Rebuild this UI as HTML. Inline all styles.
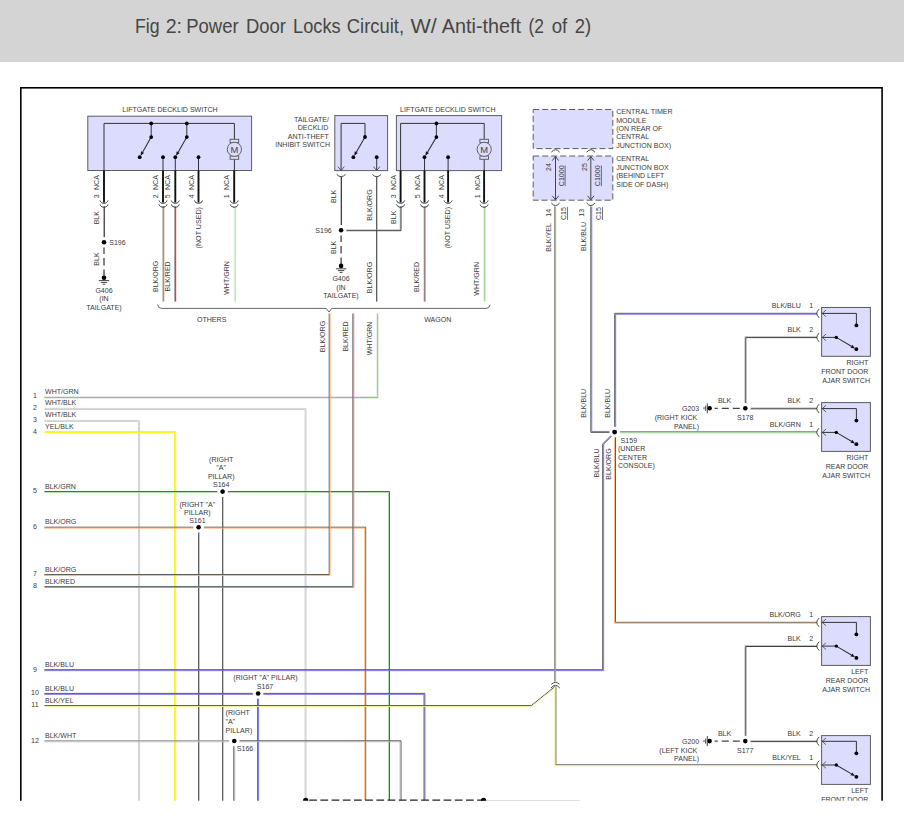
<!DOCTYPE html>
<html><head><meta charset="utf-8"><title>Fig 2: Power Door Locks Circuit</title>
<style>
html,body{margin:0;padding:0;background:#fff;}
body{width:904px;height:816px;overflow:hidden;position:relative;font-family:"Liberation Sans",sans-serif;}
#hdr{position:absolute;left:0;top:0;width:904px;height:61.6px;background:#d4d4d4;}
svg{position:absolute;left:0;top:0;}
</style></head><body>
<div id="hdr"></div>
<svg width="904" height="816" viewBox="0 0 904 816" font-family="Liberation Sans, sans-serif">
<g font-size="20.4" fill="#464646"><text x="134.93" y="33.4" textLength="24.56" lengthAdjust="spacingAndGlyphs">Fig</text><text x="165.64" y="33.4" textLength="16.36" lengthAdjust="spacingAndGlyphs">2:</text><text x="186.19" y="33.4" textLength="52.42" lengthAdjust="spacingAndGlyphs">Power</text><text x="245.89" y="33.4" textLength="40.02" lengthAdjust="spacingAndGlyphs">Door</text><text x="293.11" y="33.4" textLength="47.57" lengthAdjust="spacingAndGlyphs">Locks</text><text x="346.80" y="33.4" textLength="57.20" lengthAdjust="spacingAndGlyphs">Circuit,</text><text x="410.40" y="33.4" textLength="26.25" lengthAdjust="spacingAndGlyphs">W/</text><text x="441.80" y="33.4" textLength="79.27" lengthAdjust="spacingAndGlyphs">Anti-theft</text><text x="528.55" y="33.4" textLength="15.44" lengthAdjust="spacingAndGlyphs">(2</text><text x="551.70" y="33.4" textLength="15.59" lengthAdjust="spacingAndGlyphs">of</text><text x="574.69" y="33.4" textLength="16.42" lengthAdjust="spacingAndGlyphs">2)</text></g>
<defs><clipPath id="clip"><rect x="0" y="62" width="904" height="738.7"/></clipPath></defs>
<g clip-path="url(#clip)">
<rect x="20.8" y="87.8" width="861.3" height="760" fill="#fff" stroke="#000" stroke-width="1.6"/>
<g fill="none" stroke-linecap="butt" stroke-linejoin="miter">
<polyline points="44.40,396.60 376.75,396.60 376.75,313.50" stroke="#e6e0e6" stroke-width="0.90"/>
<polyline points="44.40,397.60 377.75,397.60 377.75,313.50" stroke="#88cc74" stroke-width="1.10"/>
<polyline points="44.40,408.40 306.10,408.40 306.10,800.30" stroke="#d6d6d6" stroke-width="1.00"/>
<polyline points="44.40,409.35 305.15,409.35 305.15,800.30" stroke="#c4c4c4" stroke-width="0.90"/>
<polyline points="44.40,420.40 139.60,420.40 139.60,806.00" stroke="#d6d6d6" stroke-width="1.00"/>
<polyline points="44.40,421.35 138.65,421.35 138.65,806.00" stroke="#c4c4c4" stroke-width="0.90"/>
<polyline points="44.40,431.45 175.80,431.45 175.80,806.00" stroke="#c4c4d0" stroke-width="0.60"/>
<polyline points="44.40,432.50 174.75,432.50 174.75,806.00" stroke="#f8f81c" stroke-width="1.50"/>
<polyline points="44.40,491.50 389.50,491.50 389.50,800.20" stroke="#585a5a" stroke-width="1.00"/>
<polyline points="44.40,492.45 388.55,492.45 388.55,800.20" stroke="#a4dc9c" stroke-width="0.90"/>
<polyline points="222.55,806.00 222.55,492.00" stroke="#585a5a" stroke-width="1.00"/>
<polyline points="223.50,806.00 223.50,492.00" stroke="#a4dc9c" stroke-width="0.90"/>
<polyline points="44.40,527.20 365.70,527.20 365.70,800.20" stroke="#585a5a" stroke-width="1.00"/>
<polyline points="44.40,528.15 364.75,528.15 364.75,800.20" stroke="#f8ae6c" stroke-width="0.90"/>
<polyline points="198.50,806.00 198.50,527.70" stroke="#585a5a" stroke-width="1.00"/>
<polyline points="199.45,806.00 199.45,527.70" stroke="#f8ae6c" stroke-width="0.90"/>
<polyline points="44.40,574.50 329.20,574.50 329.20,313.50" stroke="#585a5a" stroke-width="1.00"/>
<polyline points="44.40,575.45 330.15,575.45 330.15,313.50" stroke="#f8ae6c" stroke-width="0.90"/>
<polyline points="44.40,586.50 352.80,586.50 352.80,313.50" stroke="#6c6c6c" stroke-width="1.00"/>
<polyline points="44.40,587.45 353.75,587.45 353.75,313.50" stroke="#f06c6c" stroke-width="0.90"/>
<polyline points="44.40,669.70 602.70,669.70 602.70,444.00 614.24,432.25" stroke="#585a5a" stroke-width="1.00"/>
<polyline points="44.40,670.65 603.65,670.65 603.65,444.38 614.92,432.92" stroke="#6a6ae8" stroke-width="0.90"/>
<polyline points="44.40,693.40 424.85,693.40 424.85,800.20" stroke="#585a5a" stroke-width="1.00"/>
<polyline points="44.40,694.35 423.90,694.35 423.90,800.20" stroke="#6a6ae8" stroke-width="0.90"/>
<polyline points="257.65,806.00 257.65,693.90" stroke="#585a5a" stroke-width="1.00"/>
<polyline points="258.60,806.00 258.60,693.90" stroke="#6a6ae8" stroke-width="0.90"/>
<polyline points="44.40,705.50 531.42,705.50 555.09,686.41" stroke="#585a5a" stroke-width="1.00"/>
<polyline points="44.40,706.45 531.76,706.45 555.68,687.15" stroke="#f0f078" stroke-width="0.90"/>
<polyline points="44.40,740.80 234.30,740.80" stroke="#8e8e8e" stroke-width="1.00"/>
<polyline points="44.40,741.75 234.30,741.75" stroke="#bcbcbc" stroke-width="0.90"/>
<polyline points="234.30,740.80 401.00,740.80 401.00,800.20" stroke="#585858" stroke-width="1.00"/>
<polyline points="234.30,741.75 400.05,741.75 400.05,800.20" stroke="#b4b4b4" stroke-width="0.90"/>
<polyline points="233.80,806.00 233.80,741.30" stroke="#545454" stroke-width="1.00"/>
<polyline points="234.75,806.00 234.75,741.30" stroke="#b0b0b0" stroke-width="0.90"/>
<polyline points="554.65,681.50 554.65,206.50" stroke="#8c8c7c" stroke-width="1.00"/>
<polyline points="555.60,681.50 555.60,206.50" stroke="#a8a850" stroke-width="0.90"/>
<polyline points="555.90,686.50 555.90,764.80 817.00,764.80" stroke="#585a5a" stroke-width="1.00"/>
<polyline points="554.95,686.50 554.95,765.75 817.00,765.75" stroke="#f0f078" stroke-width="0.90"/>
<polyline points="614.60,432.40 590.80,432.40 590.80,206.50" stroke="#585a5a" stroke-width="1.00"/>
<polyline points="614.60,431.45 591.75,431.45 591.75,206.50" stroke="#6a6ae8" stroke-width="0.90"/>
<polyline points="614.70,432.00 614.70,313.30 817.00,313.30" stroke="#585a5a" stroke-width="1.00"/>
<polyline points="615.65,432.00 615.65,314.25 817.00,314.25" stroke="#6a6ae8" stroke-width="0.90"/>
<polyline points="614.60,431.90 817.00,431.90" stroke="#585a5a" stroke-width="1.00"/>
<polyline points="614.60,432.85 817.00,432.85" stroke="#a4dc9c" stroke-width="0.90"/>
<polyline points="615.50,432.00 615.50,622.30 817.00,622.30" stroke="#585a5a" stroke-width="1.00"/>
<polyline points="614.55,432.00 614.55,623.25 817.00,623.25" stroke="#f8ae6c" stroke-width="0.90"/>
<polyline points="162.70,301.60 162.70,206.50" stroke="#8e8e8e" stroke-width="0.60"/>
<polyline points="163.65,301.60 163.65,206.50" stroke="#c88c50" stroke-width="1.30"/>
<polyline points="174.55,301.60 174.55,206.50" stroke="#8a8a8a" stroke-width="0.70"/>
<polyline points="175.55,301.60 175.55,206.50" stroke="#d64646" stroke-width="1.30"/>
<polyline points="234.40,301.60 234.40,206.50" stroke="#d8ecd4" stroke-width="1.00"/>
<polyline points="235.50,301.60 235.50,206.50" stroke="#c4e4c0" stroke-width="1.20"/>
<polyline points="376.50,301.60 376.50,176.50" stroke="#585a5a" stroke-width="1.00"/>
<polyline points="377.45,301.60 377.45,176.50" stroke="#f8ae6c" stroke-width="0.90"/>
<polyline points="424.30,301.60 424.30,206.50" stroke="#6c6c6c" stroke-width="1.00"/>
<polyline points="425.25,301.60 425.25,206.50" stroke="#f06c6c" stroke-width="0.90"/>
<polyline points="483.85,301.60 483.85,206.50" stroke="#e6e0e6" stroke-width="0.90"/>
<polyline points="484.85,301.60 484.85,206.50" stroke="#88cc74" stroke-width="1.10"/>
<polyline points="103.55,242.20 103.55,206.50" stroke="#9c9c9c" stroke-width="0.70"/>
<polyline points="104.40,242.20 104.40,206.50" stroke="#3e3e3e" stroke-width="1.00"/>
<polyline points="104.00,246.50 104.00,277.70" stroke="#444" stroke-width="1.30" stroke-dasharray="7.6 3.9"/>
<polyline points="340.65,230.20 340.65,176.80" stroke="#9c9c9c" stroke-width="0.70"/>
<polyline points="341.50,230.20 341.50,176.80" stroke="#3e3e3e" stroke-width="1.00"/>
<polyline points="341.10,234.50 341.10,265.60" stroke="#444" stroke-width="1.30" stroke-dasharray="7.6 3.9"/>
<polyline points="341.10,229.85 400.15,229.85 400.15,206.50" stroke="#9c9c9c" stroke-width="0.70"/>
<polyline points="341.10,230.70 401.00,230.70 401.00,206.50" stroke="#3e3e3e" stroke-width="1.00"/>
<polyline points="744.95,408.30 744.95,336.75 817.00,336.75" stroke="#9c9c9c" stroke-width="0.70"/>
<polyline points="745.80,408.30 745.80,337.60 817.00,337.60" stroke="#3e3e3e" stroke-width="1.00"/>
<polyline points="745.30,407.95 817.00,407.95" stroke="#9c9c9c" stroke-width="0.70"/>
<polyline points="745.30,408.80 817.00,408.80" stroke="#3e3e3e" stroke-width="1.00"/>
<polyline points="739.80,408.40 714.60,408.40" stroke="#444" stroke-width="1.30" stroke-dasharray="7.0 4.0"/>
<polyline points="744.95,741.10 744.95,645.65 817.00,645.65" stroke="#9c9c9c" stroke-width="0.70"/>
<polyline points="745.80,741.10 745.80,646.50 817.00,646.50" stroke="#3e3e3e" stroke-width="1.00"/>
<polyline points="745.30,740.75 817.00,740.75" stroke="#9c9c9c" stroke-width="0.70"/>
<polyline points="745.30,741.60 817.00,741.60" stroke="#3e3e3e" stroke-width="1.00"/>
<polyline points="739.80,741.20 714.60,741.20" stroke="#444" stroke-width="1.30" stroke-dasharray="7.0 4.0"/>
<polyline points="309.20,800.40 483.60,800.40" stroke="#222" stroke-width="1.80" stroke-dasharray="7.7 3.5"/>
<polyline points="483.60,800.60 579.60,800.60" stroke="#cfcfcf" stroke-width="1.00"/>
</g>
<circle cx="222.60" cy="491.60" r="5.3" fill="#fff" stroke="none"/>
<circle cx="222.60" cy="491.60" r="2.30" fill="#000" stroke="none"/>
<circle cx="198.60" cy="527.30" r="5.3" fill="#fff" stroke="none"/>
<circle cx="198.60" cy="527.30" r="2.30" fill="#000" stroke="none"/>
<circle cx="258.10" cy="693.50" r="5.3" fill="#fff" stroke="none"/>
<circle cx="258.10" cy="693.50" r="2.30" fill="#000" stroke="none"/>
<circle cx="234.30" cy="741.00" r="5.3" fill="#fff" stroke="none"/>
<circle cx="234.30" cy="741.00" r="2.30" fill="#000" stroke="none"/>
<circle cx="104.00" cy="242.20" r="5.3" fill="#fff" stroke="none"/>
<circle cx="104.00" cy="242.20" r="2.30" fill="#000" stroke="none"/>
<circle cx="341.10" cy="230.30" r="5.3" fill="#fff" stroke="none"/>
<circle cx="341.10" cy="230.30" r="2.30" fill="#000" stroke="none"/>
<circle cx="745.30" cy="408.30" r="5.3" fill="#fff" stroke="none"/>
<circle cx="745.30" cy="408.30" r="2.30" fill="#000" stroke="none"/>
<circle cx="745.30" cy="741.10" r="5.3" fill="#fff" stroke="none"/>
<circle cx="745.30" cy="741.10" r="2.30" fill="#000" stroke="none"/>
<circle cx="614.60" cy="432.10" r="5.3" fill="#fff" stroke="none"/>
<circle cx="614.60" cy="432.10" r="2.45" fill="#000" stroke="none"/>
<circle cx="305.70" cy="800.30" r="2.60" fill="#000" stroke="none"/>
<circle cx="483.60" cy="800.30" r="2.60" fill="#000" stroke="none"/>
<circle cx="104.00" cy="277.70" r="2.30" fill="#000" stroke="none"/>
<g stroke="#333" stroke-width="0.9" fill="none">
<line x1="98.80" y1="280.60" x2="109.20" y2="280.60"/>
<line x1="100.80" y1="282.40" x2="107.20" y2="282.40"/>
<line x1="102.60" y1="284.20" x2="105.40" y2="284.20"/>
</g>
<circle cx="341.10" cy="265.90" r="2.30" fill="#000" stroke="none"/>
<g stroke="#333" stroke-width="0.9" fill="none">
<line x1="335.90" y1="268.80" x2="346.30" y2="268.80"/>
<line x1="337.90" y1="270.60" x2="344.30" y2="270.60"/>
<line x1="339.70" y1="272.40" x2="342.50" y2="272.40"/>
</g>
<circle cx="709.60" cy="408.30" r="2.30" fill="#000" stroke="none"/>
<g stroke="#333" stroke-width="0.9" fill="none">
<line x1="707.30" y1="403.30" x2="707.30" y2="413.30"/>
<line x1="705.70" y1="405.70" x2="705.70" y2="410.90"/>
<line x1="704.00" y1="407.20" x2="704.00" y2="409.40"/>
</g>
<circle cx="709.60" cy="741.10" r="2.30" fill="#000" stroke="none"/>
<g stroke="#333" stroke-width="0.9" fill="none">
<line x1="707.30" y1="736.10" x2="707.30" y2="746.10"/>
<line x1="705.70" y1="738.50" x2="705.70" y2="743.70"/>
<line x1="704.00" y1="740.00" x2="704.00" y2="742.20"/>
</g>
<g fill="none" stroke="#444" stroke-width="1.0">
<path d="M551.3,684.3 Q555.4,680.4 559.5,684.3"/>
<path d="M551.0,688.0 Q555.4,682.6 559.8,688.0"/>
</g>
<rect x="87.80" y="116.20" width="163.80" height="54.30" fill="#dcdcff" stroke="#5c5c5c" stroke-width="1"/>
<g fill="none" stroke="#333" stroke-width="1.0">
<polyline points="104,170.6 104,123.4 234.4,123.4 234.4,139.5"/>
<line x1="234.4" y1="159.3" x2="234.4" y2="170.6"/>
<line x1="151.2" y1="123.4" x2="151.2" y2="137.1"/>
<line x1="186.8" y1="123.4" x2="186.8" y2="137.1"/>
<line x1="163.0" y1="157.2" x2="163.0" y2="170.6"/>
<line x1="175.3" y1="157.2" x2="175.3" y2="170.6"/>
<line x1="198.5" y1="157.2" x2="198.5" y2="170.6"/>
</g>
<line x1="151.20" y1="137.10" x2="142.58" y2="152.17" stroke="#333" stroke-width="1.1"/>
<polygon points="140.49,155.81 141.10,151.32 144.06,153.01" fill="#111"/>
<line x1="186.80" y1="137.10" x2="178.18" y2="152.17" stroke="#333" stroke-width="1.1"/>
<polygon points="176.09,155.81 176.70,151.32 179.66,153.01" fill="#111"/>
<circle cx="151.20" cy="123.40" r="1.90" fill="#000"/>
<circle cx="151.20" cy="137.10" r="1.90" fill="#000"/>
<circle cx="186.80" cy="123.40" r="1.90" fill="#000"/>
<circle cx="186.80" cy="137.10" r="1.90" fill="#000"/>
<circle cx="139.70" cy="157.20" r="1.90" fill="#000"/>
<circle cx="163.00" cy="157.20" r="1.90" fill="#000"/>
<circle cx="175.30" cy="157.20" r="1.90" fill="#000"/>
<circle cx="198.50" cy="157.20" r="1.90" fill="#000"/>
<g fill="#dcdcff" stroke="#555" stroke-width="0.9">
<rect x="230.10" y="139.30" width="8.6" height="3.4"/>
<rect x="230.10" y="155.90" width="8.6" height="3.4"/>
<circle cx="234.40" cy="149.30" r="7.1"/>
</g>
<text x="234.40" y="152.70" text-anchor="middle" font-size="9.4" fill="#444">M</text>
<line x1="104.00" y1="170.60" x2="104.00" y2="202.60" stroke="#111" stroke-width="1.9"/>
<g fill="none" stroke="#333" stroke-width="1.0">
<path d="M100.00,200.50 C100.80,204.20 107.20,204.20 108.00,200.50"/>
<path d="M100.00,204.40 C100.80,208.10 107.20,208.10 108.00,204.40"/>
</g>
<line x1="163.00" y1="170.60" x2="163.00" y2="202.60" stroke="#111" stroke-width="1.9"/>
<g fill="none" stroke="#333" stroke-width="1.0">
<path d="M159.00,200.50 C159.80,204.20 166.20,204.20 167.00,200.50"/>
<path d="M159.00,204.40 C159.80,208.10 166.20,208.10 167.00,204.40"/>
</g>
<line x1="175.30" y1="170.60" x2="175.30" y2="202.60" stroke="#111" stroke-width="1.9"/>
<g fill="none" stroke="#333" stroke-width="1.0">
<path d="M171.30,200.50 C172.10,204.20 178.50,204.20 179.30,200.50"/>
<path d="M171.30,204.40 C172.10,208.10 178.50,208.10 179.30,204.40"/>
</g>
<line x1="234.20" y1="170.60" x2="234.20" y2="202.60" stroke="#111" stroke-width="1.9"/>
<g fill="none" stroke="#333" stroke-width="1.0">
<path d="M230.20,200.50 C231.00,204.20 237.40,204.20 238.20,200.50"/>
<path d="M230.20,204.40 C231.00,208.10 237.40,208.10 238.20,204.40"/>
</g>
<line x1="198.50" y1="170.60" x2="198.50" y2="202.60" stroke="#111" stroke-width="1.9"/>
<g fill="none" stroke="#333" stroke-width="1.0">
<path d="M194.50,200.50 C195.30,204.20 201.70,204.20 202.50,200.50"/>
</g>
<rect x="334.80" y="115.60" width="52.80" height="55.00" fill="#dcdcff" stroke="#5c5c5c" stroke-width="1"/>
<g fill="none" stroke="#333" stroke-width="1.0">
<polyline points="341.1,170 341.1,123.4 365.0,123.4 365.0,137.0"/>
<line x1="376.7" y1="157.2" x2="376.7" y2="170"/>
<polyline points="337.90,166.6 341.10,170.6 344.30,166.6" stroke-width="0.8"/>
<polyline points="373.50,166.6 376.70,170.6 379.90,166.6" stroke-width="0.8"/>
</g>
<line x1="365.00" y1="137.00" x2="356.29" y2="152.17" stroke="#333" stroke-width="1.1"/>
<polygon points="354.20,155.81 354.81,151.32 357.76,153.02" fill="#111"/>
<circle cx="365.00" cy="137.00" r="1.90" fill="#000"/>
<circle cx="353.40" cy="157.20" r="1.90" fill="#000"/>
<circle cx="376.70" cy="157.20" r="1.90" fill="#000"/>
<path d="M336.70,174.4 Q341.10,179.0 345.50,174.4" fill="none" stroke="#333" stroke-width="0.9"/>
<path d="M372.30,174.4 Q376.70,179.0 381.10,174.4" fill="none" stroke="#333" stroke-width="0.9"/>
<rect x="396.40" y="115.60" width="105.20" height="55.00" fill="#dcdcff" stroke="#5c5c5c" stroke-width="1"/>
<g fill="none" stroke="#333" stroke-width="1.0">
<polyline points="400.6,170.6 400.6,123.4 484.2,123.4 484.2,139.5"/>
<line x1="484.2" y1="159.3" x2="484.2" y2="170.6"/>
<line x1="436.4" y1="123.4" x2="436.4" y2="137.1"/>
<line x1="424.5" y1="157.2" x2="424.5" y2="170.6"/>
<line x1="448.1" y1="157.2" x2="448.1" y2="170.6"/>
</g>
<line x1="436.40" y1="137.10" x2="427.45" y2="152.21" stroke="#333" stroke-width="1.1"/>
<polygon points="425.32,155.82 425.99,151.34 428.92,153.08" fill="#111"/>
<circle cx="436.40" cy="123.40" r="1.90" fill="#000"/>
<circle cx="436.40" cy="137.10" r="1.90" fill="#000"/>
<circle cx="424.50" cy="157.20" r="1.90" fill="#000"/>
<circle cx="448.10" cy="157.20" r="1.90" fill="#000"/>
<g fill="#dcdcff" stroke="#555" stroke-width="0.9">
<rect x="479.90" y="139.30" width="8.6" height="3.4"/>
<rect x="479.90" y="155.90" width="8.6" height="3.4"/>
<circle cx="484.20" cy="149.30" r="7.1"/>
</g>
<text x="484.20" y="152.70" text-anchor="middle" font-size="9.4" fill="#444">M</text>
<line x1="400.60" y1="170.60" x2="400.60" y2="202.60" stroke="#111" stroke-width="1.9"/>
<g fill="none" stroke="#333" stroke-width="1.0">
<path d="M396.60,200.50 C397.40,204.20 403.80,204.20 404.60,200.50"/>
<path d="M396.60,204.40 C397.40,208.10 403.80,208.10 404.60,204.40"/>
</g>
<line x1="424.50" y1="170.60" x2="424.50" y2="202.60" stroke="#111" stroke-width="1.9"/>
<g fill="none" stroke="#333" stroke-width="1.0">
<path d="M420.50,200.50 C421.30,204.20 427.70,204.20 428.50,200.50"/>
<path d="M420.50,204.40 C421.30,208.10 427.70,208.10 428.50,204.40"/>
</g>
<line x1="484.10" y1="170.60" x2="484.10" y2="202.60" stroke="#111" stroke-width="1.9"/>
<g fill="none" stroke="#333" stroke-width="1.0">
<path d="M480.10,200.50 C480.90,204.20 487.30,204.20 488.10,200.50"/>
<path d="M480.10,204.40 C480.90,208.10 487.30,208.10 488.10,204.40"/>
</g>
<line x1="448.10" y1="170.60" x2="448.10" y2="202.60" stroke="#111" stroke-width="1.9"/>
<g fill="none" stroke="#333" stroke-width="1.0">
<path d="M444.10,200.50 C444.90,204.20 451.30,204.20 452.10,200.50"/>
</g>
<rect x="533.20" y="109.50" width="79.60" height="39.10" fill="#dcdcff" stroke="#5c5c5c" stroke-width="1" stroke-dasharray="6 3"/>
<rect x="533.20" y="156.00" width="79.60" height="44.20" fill="#dcdcff" stroke="#5c5c5c" stroke-width="1" stroke-dasharray="6 3"/>
<g fill="none" stroke="#444" stroke-width="1">
<line x1="555.5" y1="156.4" x2="555.5" y2="200"/>
<polyline points="552.30,160.6 555.50,156.6 558.70,160.6"/>
<polyline points="552.30,195.8 555.50,199.8 558.70,195.8"/>
<path d="M551.30,152.2 Q555.50,147.2 559.70,152.2"/>
<path d="M551.30,203.0 Q555.50,208.2 559.70,203.0"/>
<line x1="590.8" y1="156.4" x2="590.8" y2="200"/>
<polyline points="587.60,160.6 590.80,156.6 594.00,160.6"/>
<polyline points="587.60,195.8 590.80,199.8 594.00,195.8"/>
<path d="M586.60,152.2 Q590.80,147.2 595.00,152.2"/>
<path d="M586.60,203.0 Q590.80,208.2 595.00,203.0"/>
</g>
<rect x="821.60" y="307.50" width="48.80" height="48.80" fill="#dcdcff" stroke="#5c5c5c" stroke-width="1"/>
<g fill="none" stroke="#333" stroke-width="1.0">
<polyline points="821.6,313.40 856.4,313.40 856.4,325.40"/>
<line x1="821.6" y1="337.40" x2="836.3" y2="337.40"/>
<polyline points="826.0,310.10 822.2,313.40 826.0,316.70" stroke-width="0.8" stroke="#444"/>
<path d="M819.2,309.00 Q814.4,313.40 819.2,317.80" stroke-width="0.9"/>
<polyline points="826.0,334.10 822.2,337.40 826.0,340.70" stroke-width="0.8" stroke="#444"/>
<path d="M819.2,333.00 Q814.4,337.40 819.2,341.80" stroke-width="0.9"/>
</g>
<line x1="836.30" y1="337.40" x2="851.40" y2="346.26" stroke="#333" stroke-width="1.1"/>
<polygon points="855.02,348.39 850.54,347.73 852.26,344.80" fill="#111"/>
<circle cx="856.40" cy="325.40" r="1.90" fill="#000"/>
<circle cx="836.30" cy="337.40" r="1.70" fill="#000"/>
<circle cx="856.40" cy="349.20" r="1.90" fill="#000"/>
<rect x="821.60" y="402.60" width="48.80" height="48.80" fill="#dcdcff" stroke="#5c5c5c" stroke-width="1"/>
<g fill="none" stroke="#333" stroke-width="1.0">
<polyline points="821.6,408.60 856.4,408.60 856.4,420.60"/>
<line x1="821.6" y1="432.40" x2="836.3" y2="432.40"/>
<polyline points="826.0,405.30 822.2,408.60 826.0,411.90" stroke-width="0.8" stroke="#444"/>
<path d="M819.2,404.20 Q814.4,408.60 819.2,413.00" stroke-width="0.9"/>
<polyline points="826.0,429.10 822.2,432.40 826.0,435.70" stroke-width="0.8" stroke="#444"/>
<path d="M819.2,428.00 Q814.4,432.40 819.2,436.80" stroke-width="0.9"/>
</g>
<line x1="836.30" y1="432.40" x2="851.40" y2="441.26" stroke="#333" stroke-width="1.1"/>
<polygon points="855.02,443.39 850.54,442.73 852.26,439.80" fill="#111"/>
<circle cx="856.40" cy="420.60" r="1.90" fill="#000"/>
<circle cx="836.30" cy="432.40" r="1.70" fill="#000"/>
<circle cx="856.40" cy="444.20" r="1.90" fill="#000"/>
<rect x="821.60" y="616.60" width="48.80" height="48.80" fill="#dcdcff" stroke="#5c5c5c" stroke-width="1"/>
<g fill="none" stroke="#333" stroke-width="1.0">
<polyline points="821.6,622.40 856.4,622.40 856.4,634.40"/>
<line x1="821.6" y1="646.10" x2="836.3" y2="646.10"/>
<polyline points="826.0,619.10 822.2,622.40 826.0,625.70" stroke-width="0.8" stroke="#444"/>
<path d="M819.2,618.00 Q814.4,622.40 819.2,626.80" stroke-width="0.9"/>
<polyline points="826.0,642.80 822.2,646.10 826.0,649.40" stroke-width="0.8" stroke="#444"/>
<path d="M819.2,641.70 Q814.4,646.10 819.2,650.50" stroke-width="0.9"/>
</g>
<line x1="836.30" y1="646.10" x2="851.40" y2="654.96" stroke="#333" stroke-width="1.1"/>
<polygon points="855.02,657.09 850.54,656.43 852.26,653.50" fill="#111"/>
<circle cx="856.40" cy="634.40" r="1.90" fill="#000"/>
<circle cx="836.30" cy="646.10" r="1.70" fill="#000"/>
<circle cx="856.40" cy="657.90" r="1.90" fill="#000"/>
<rect x="821.60" y="735.60" width="48.80" height="48.80" fill="#dcdcff" stroke="#5c5c5c" stroke-width="1"/>
<g fill="none" stroke="#333" stroke-width="1.0">
<polyline points="821.6,741.30 856.4,741.30 856.4,753.30"/>
<line x1="821.6" y1="765.00" x2="836.3" y2="765.00"/>
<polyline points="826.0,738.00 822.2,741.30 826.0,744.60" stroke-width="0.8" stroke="#444"/>
<path d="M819.2,736.90 Q814.4,741.30 819.2,745.70" stroke-width="0.9"/>
<polyline points="826.0,761.70 822.2,765.00 826.0,768.30" stroke-width="0.8" stroke="#444"/>
<path d="M819.2,760.60 Q814.4,765.00 819.2,769.40" stroke-width="0.9"/>
</g>
<line x1="836.30" y1="765.00" x2="851.40" y2="773.86" stroke="#333" stroke-width="1.1"/>
<polygon points="855.02,775.99 850.54,775.33 852.26,772.40" fill="#111"/>
<circle cx="856.40" cy="753.30" r="1.90" fill="#000"/>
<circle cx="836.30" cy="765.00" r="1.70" fill="#000"/>
<circle cx="856.40" cy="776.80" r="1.90" fill="#000"/>
<path d="M157.5,304.6 Q158.2,308.4 161.5,308.4 L326.2,308.4 L329,312 L331.8,308.4 L486.0,308.4 Q489.4,308.4 490.2,304.8" fill="none" stroke="#555" stroke-width="0.9"/>
<g font-family="Liberation Sans, sans-serif" font-size="7.05" fill="#3a3a3a">
<text x="170.00" y="112.12" text-anchor="middle">LIFTGATE DECKLID SWITCH</text>
<text x="447.80" y="112.12" text-anchor="middle">LIFTGATE DECKLID SWITCH</text>
<text x="328.90" y="121.62" text-anchor="end">TAILGATE/</text>
<text x="328.30" y="130.12" text-anchor="end">DECKLID</text>
<text x="328.80" y="138.62" text-anchor="end">ANTI-THEFT</text>
<text x="330.00" y="147.12" text-anchor="end">INHIBIT SWITCH</text>
<text x="616.20" y="114.22">CENTRAL TIMER</text>
<text x="616.20" y="122.62">MODULE</text>
<text x="616.20" y="131.02">(ON REAR OF</text>
<text x="616.20" y="139.42">CENTRAL</text>
<text x="616.20" y="147.82">JUNCTION BOX)</text>
<text x="616.20" y="161.12">CENTRAL</text>
<text x="616.20" y="169.72">JUNCTION BOX</text>
<text x="616.20" y="178.32">(BEHIND LEFT</text>
<text x="616.20" y="186.92">SIDE OF DASH)</text>
<text transform="translate(98.72,198.30) rotate(-90)">3</text>
<text transform="translate(98.72,190.00) rotate(-90)">NCA</text>
<text transform="translate(157.82,198.30) rotate(-90)">2</text>
<text transform="translate(157.82,190.00) rotate(-90)">NCA</text>
<text transform="translate(170.12,198.30) rotate(-90)">5</text>
<text transform="translate(170.12,190.00) rotate(-90)">NCA</text>
<text transform="translate(194.32,198.30) rotate(-90)">4</text>
<text transform="translate(194.32,190.00) rotate(-90)">NCA</text>
<text transform="translate(229.22,198.30) rotate(-90)">1</text>
<text transform="translate(229.22,190.00) rotate(-90)">NCA</text>
<text transform="translate(395.92,198.30) rotate(-90)">3</text>
<text transform="translate(395.92,190.00) rotate(-90)">NCA</text>
<text transform="translate(420.12,198.30) rotate(-90)">5</text>
<text transform="translate(420.12,190.00) rotate(-90)">NCA</text>
<text transform="translate(443.72,198.30) rotate(-90)">4</text>
<text transform="translate(443.72,190.00) rotate(-90)">NCA</text>
<text transform="translate(479.52,198.30) rotate(-90)">1</text>
<text transform="translate(479.52,190.00) rotate(-90)">NCA</text>
<text transform="translate(98.72,217.70) rotate(-90)" text-anchor="middle">BLK</text>
<text transform="translate(98.72,259.00) rotate(-90)" text-anchor="middle">BLK</text>
<text transform="translate(157.82,276.40) rotate(-90)" text-anchor="middle">BLK/ORG</text>
<text transform="translate(170.12,276.40) rotate(-90)" text-anchor="middle">BLK/RED</text>
<text transform="translate(229.22,278.00) rotate(-90)" text-anchor="middle">WHT/GRN</text>
<text transform="translate(200.52,248.40) rotate(-90)" textLength="41.4" lengthAdjust="spacingAndGlyphs">(NOT USED)</text>
<text transform="translate(450.42,248.30) rotate(-90)" textLength="41.4" lengthAdjust="spacingAndGlyphs">(NOT USED)</text>
<text transform="translate(336.42,196.40) rotate(-90)" text-anchor="middle">BLK</text>
<text transform="translate(336.42,247.40) rotate(-90)" text-anchor="middle">BLK</text>
<text transform="translate(371.82,205.00) rotate(-90)" text-anchor="middle">BLK/ORG</text>
<text transform="translate(371.82,277.50) rotate(-90)" text-anchor="middle">BLK/ORG</text>
<text transform="translate(395.92,217.30) rotate(-90)" text-anchor="middle">BLK</text>
<text transform="translate(419.02,277.00) rotate(-90)" text-anchor="middle">BLK/RED</text>
<text transform="translate(479.02,278.80) rotate(-90)" text-anchor="middle">WHT/GRN</text>
<text transform="translate(324.52,336.50) rotate(-90)" text-anchor="middle">BLK/ORG</text>
<text transform="translate(348.32,336.50) rotate(-90)" text-anchor="middle">BLK/RED</text>
<text transform="translate(372.12,338.50) rotate(-90)" text-anchor="middle">WHT/GRN</text>
<text x="109.20" y="245.02">S196</text>
<text x="331.80" y="233.02" text-anchor="end">S196</text>
<text x="104.00" y="292.82" text-anchor="middle">G406</text>
<text x="341.00" y="281.12" text-anchor="middle">G406</text>
<text x="104.00" y="301.47" text-anchor="middle">(IN</text>
<text x="341.00" y="289.52" text-anchor="middle">(IN</text>
<text x="104.00" y="310.12" text-anchor="middle">TAILGATE)</text>
<text x="341.00" y="297.92" text-anchor="middle">TAILGATE)</text>
<text x="211.70" y="322.02" text-anchor="middle">OTHERS</text>
<text x="437.80" y="322.02" text-anchor="middle">WAGON</text>
<text transform="translate(550.72,167.00) rotate(-90)" text-anchor="middle">24</text>
<text transform="translate(586.52,167.00) rotate(-90)" text-anchor="middle">25</text>
<text transform="translate(563.72,175.80) rotate(-90)" text-anchor="middle" text-decoration="underline">C1000</text>
<text transform="translate(599.92,175.80) rotate(-90)" text-anchor="middle" text-decoration="underline">C1000</text>
<text transform="translate(550.72,212.80) rotate(-90)" text-anchor="middle">14</text>
<text transform="translate(583.72,212.80) rotate(-90)" text-anchor="middle">13</text>
<text transform="translate(566.32,213.50) rotate(-90)" text-anchor="middle" text-decoration="underline">C15</text>
<text transform="translate(601.02,213.50) rotate(-90)" text-anchor="middle" text-decoration="underline">C15</text>
<text transform="translate(550.72,237.50) rotate(-90)" text-anchor="middle">BLK/YEL</text>
<text transform="translate(586.12,236.50) rotate(-90)" text-anchor="middle">BLK/BLU</text>
<text transform="translate(586.12,403.30) rotate(-90)" text-anchor="middle">BLK/BLU</text>
<text transform="translate(610.22,403.30) rotate(-90)" text-anchor="middle">BLK/BLU</text>
<text transform="translate(598.52,463.00) rotate(-90)" text-anchor="middle">BLK/BLU</text>
<text transform="translate(610.52,464.00) rotate(-90)" text-anchor="middle">BLK/ORG</text>
<text x="620.60" y="442.52">S159</text>
<text x="618.00" y="450.92">(UNDER</text>
<text x="618.00" y="459.52">CENTER</text>
<text x="618.00" y="468.12">CONSOLE)</text>
<text x="34.90" y="398.42" text-anchor="middle">1</text>
<text x="45.00" y="394.32">WHT/GRN</text>
<text x="34.90" y="410.12" text-anchor="middle">2</text>
<text x="45.00" y="405.12">WHT/BLK</text>
<text x="34.90" y="421.92" text-anchor="middle">3</text>
<text x="45.00" y="416.92">WHT/BLK</text>
<text x="34.90" y="434.02" text-anchor="middle">4</text>
<text x="45.00" y="429.02">YEL/BLK</text>
<text x="34.90" y="493.12" text-anchor="middle">5</text>
<text x="45.00" y="489.02">BLK/GRN</text>
<text x="34.90" y="529.02" text-anchor="middle">6</text>
<text x="45.00" y="524.02">BLK/ORG</text>
<text x="34.90" y="576.02" text-anchor="middle">7</text>
<text x="45.00" y="571.92">BLK/ORG</text>
<text x="34.90" y="588.12" text-anchor="middle">8</text>
<text x="45.00" y="584.02">BLK/RED</text>
<text x="34.90" y="672.02" text-anchor="middle">9</text>
<text x="45.00" y="667.12">BLK/BLU</text>
<text x="34.90" y="695.32" text-anchor="middle">10</text>
<text x="45.00" y="691.32">BLK/BLU</text>
<text x="34.90" y="706.62" text-anchor="middle">11</text>
<text x="45.00" y="703.22">BLK/YEL</text>
<text x="34.90" y="742.72" text-anchor="middle">12</text>
<text x="45.00" y="738.12">BLK/WHT</text>
<text x="221.20" y="461.92" text-anchor="middle">(RIGHT</text>
<text x="221.20" y="470.27" text-anchor="middle">&quot;A&quot;</text>
<text x="221.20" y="478.62" text-anchor="middle">PILLAR)</text>
<text x="221.20" y="486.97" text-anchor="middle">S164</text>
<text x="197.40" y="507.22" text-anchor="middle">(RIGHT &quot;A&quot;</text>
<text x="197.40" y="515.22" text-anchor="middle">PILLAR)</text>
<text x="197.40" y="523.22" text-anchor="middle">S161</text>
<text x="265.50" y="680.02" text-anchor="middle">(RIGHT &quot;A&quot; PILLAR)</text>
<text x="265.00" y="689.12" text-anchor="middle">S167</text>
<text x="225.60" y="714.82">(RIGHT</text>
<text x="225.60" y="723.82">&quot;A&quot;</text>
<text x="225.60" y="732.82">PILLAR)</text>
<text x="236.80" y="751.02">S166</text>
<text x="800.80" y="308.02" text-anchor="end">BLK/BLU</text>
<text x="811.20" y="308.02" text-anchor="middle">1</text>
<text x="800.80" y="331.52" text-anchor="end">BLK</text>
<text x="811.20" y="331.52" text-anchor="middle">2</text>
<text x="800.80" y="403.12" text-anchor="end">BLK</text>
<text x="811.20" y="403.12" text-anchor="middle">2</text>
<text x="800.80" y="426.62" text-anchor="end">BLK/GRN</text>
<text x="811.20" y="426.62" text-anchor="middle">1</text>
<text x="800.80" y="616.92" text-anchor="end">BLK/ORG</text>
<text x="811.20" y="616.92" text-anchor="middle">1</text>
<text x="800.80" y="640.62" text-anchor="end">BLK</text>
<text x="811.20" y="640.62" text-anchor="middle">2</text>
<text x="800.80" y="735.82" text-anchor="end">BLK</text>
<text x="811.20" y="735.82" text-anchor="middle">2</text>
<text x="800.80" y="759.52" text-anchor="end">BLK/YEL</text>
<text x="811.20" y="759.52" text-anchor="middle">1</text>
<text x="868.40" y="365.32" text-anchor="end">RIGHT</text>
<text x="868.40" y="374.12" text-anchor="end">FRONT DOOR</text>
<text x="870.00" y="382.92" text-anchor="end">AJAR SWITCH</text>
<text x="868.40" y="459.92" text-anchor="end">RIGHT</text>
<text x="868.40" y="468.72" text-anchor="end">REAR DOOR</text>
<text x="870.00" y="477.52" text-anchor="end">AJAR SWITCH</text>
<text x="868.40" y="674.02" text-anchor="end">LEFT</text>
<text x="868.40" y="682.82" text-anchor="end">REAR DOOR</text>
<text x="870.00" y="691.62" text-anchor="end">AJAR SWITCH</text>
<text x="868.40" y="792.92" text-anchor="end">LEFT</text>
<text x="868.40" y="801.72" text-anchor="end">FRONT DOOR</text>
<text x="870.00" y="810.52" text-anchor="end">AJAR SWITCH</text>
<text x="724.60" y="403.02" text-anchor="middle">BLK</text>
<text x="724.60" y="735.72" text-anchor="middle">BLK</text>
<text x="699.20" y="411.12" text-anchor="end">G203</text>
<text x="697.20" y="419.92" text-anchor="end">(RIGHT KICK</text>
<text x="699.00" y="428.72" text-anchor="end">PANEL)</text>
<text x="699.20" y="743.82" text-anchor="end">G200</text>
<text x="697.20" y="752.52" text-anchor="end">(LEFT KICK</text>
<text x="699.00" y="761.12" text-anchor="end">PANEL)</text>
<text x="745.20" y="419.92" text-anchor="middle">S178</text>
<text x="745.20" y="752.52" text-anchor="middle">S177</text>
</g>
</g>
</svg>
</body></html>
